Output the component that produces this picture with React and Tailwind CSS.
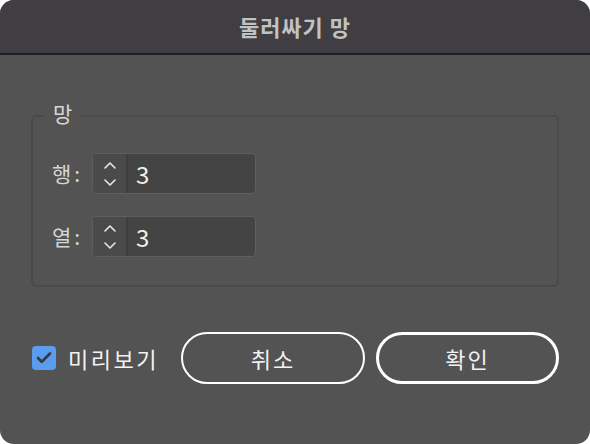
import { Check } from 'lucide-react'

function Stepper({ label, value }) {
  return (
    <div className="flex items-center">
      <span className="w-[59px] pl-[19px] text-[21px] tracking-[3px] text-[#d6d6d6]">{label}</span>
      <div className="flex h-[41px] w-[164px] rounded-[4px] border border-[#5e5e5e] bg-[#444444] overflow-hidden">
        <div className="flex w-[35px] flex-col items-center justify-center border-r-2 border-[#3e3e3e] bg-[#4a4a4a]">
          <svg width="16" height="34" viewBox="0 0 16 34" fill="none" stroke="#e8e8e8" strokeWidth="1.6" strokeLinecap="round" strokeLinejoin="round">
            <path d="M3 11 L8 6 L13 11" />
            <path d="M3 23 L8 28 L13 23" />
          </svg>
        </div>
        <span className="flex items-center pl-[8px] text-[24px] text-[#f0f0f0]">{value}</span>
      </div>
    </div>
  )
}

export default function App() {
  return (
    <div className="h-[444px] w-[590px] bg-white" style={{ fontFamily: '"Noto Sans CJK KR", "Noto Sans", sans-serif' }}>
      <div className="flex h-full flex-col overflow-hidden rounded-[14px] bg-[#535353]">
        <div className="flex h-[55px] items-center justify-center border-b-2 border-[#1f1f1f] bg-[#403e43]">
          <span className="text-[22px] font-bold tracking-[1px] text-[#c2c2c2]">둘러싸기 망</span>
        </div>

        <div className="relative mx-[31px] mt-[60px] h-[172px] rounded-[5px] border-2 border-[#4a4a4a]">
          <span className="absolute -top-[19px] left-[11px] bg-[#535353] px-[9px] text-[21px] leading-[30px] text-[#d6d6d6]">망</span>
          <div className="flex flex-col gap-[22px] pt-[36px]">
            <Stepper label="행:" value="3" />
            <Stepper label="열:" value="3" />
          </div>
        </div>

        <div className="mt-[45px] flex items-center">
          <div className="ml-[32px] flex h-[24px] w-[24px] items-center justify-center rounded-[4px] bg-[#5a9cf0]">
            <Check size={18} strokeWidth={3.6} color="#3a3a3a" />
          </div>
          <span className="ml-[12px] w-[113px] text-[22px] tracking-[2.5px] text-[#f2f2f2]">미리보기</span>
          <button className="h-[52px] w-[184px] rounded-full border-2 border-white text-[22px] tracking-[2px] text-[#f2f2f2]">취소</button>
          <button className="ml-[11px] h-[52px] w-[183px] rounded-full border-[3px] border-white text-[22px] tracking-[2px] text-[#f2f2f2]">확인</button>
        </div>
      </div>
    </div>
  )
}
